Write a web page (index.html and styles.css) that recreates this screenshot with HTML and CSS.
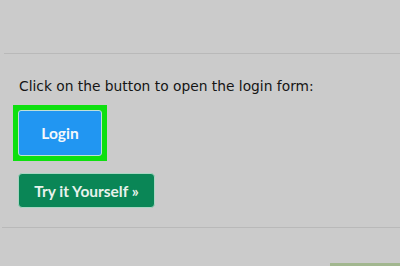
FILE: index.html
```html
<!DOCTYPE html>
<html>
<head>
<meta charset="utf-8">
<link rel="stylesheet" href="styles.css">
</head>
<body>
<div class="page">
  <div class="rule rule-top"></div>
  <p class="intro">Click on the button to open the login form:</p>
  <div class="highlight"><button class="btn-login">Login</button></div>
  <a class="btn-try">Try it Yourself »</a>
  <div class="rule rule-bottom"></div>
  <div class="footer"><div class="badge"></div></div>
</div>
</body>
</html>
```
FILE: styles.css
```css
html, body {
  margin: 0;
  padding: 0;
  background: #cbcbcb;
}
.page {
  width: 400px;
  height: 266px;
  overflow: hidden;
  display: flex;
  flex-direction: column;
  align-items: flex-start;
}
.rule {
  height: 1px;
  background: #b9b9b9;
  align-self: stretch;
  margin-left: 4px;
}
.rule-top {
  margin-top: 53px;
}
.intro {
  margin: 23px 0 0 19px;
  font-family: "DejaVu Sans", Verdana, sans-serif;
  font-size: 13.8px;
  line-height: 18px;
  color: #151515;
}
.highlight {
  margin: 10px 0 0 13px;
  border: 5px solid #0ee010;
  background: #0ee010;
  display: flex;
}
.btn-login {
  box-sizing: border-box;
  width: 84px;
  height: 46px;
  border: 1px solid #bfe0d8;
  border-radius: 3px;
  background: #2196f2;
  color: #f4f8fb;
  font-family: Lato, "Open Sans", sans-serif;
  font-weight: 700;
  font-size: 15.5px;
  padding: 0;
}
.btn-try {
  margin: 12px 0 0 18px;
  width: 137px;
  height: 35px;
  box-sizing: border-box;
  border: 1px solid #a8d6c2;
  border-radius: 4px;
  background: #0a8656;
  color: #e8f2ec;
  font-family: Lato, "Open Sans", sans-serif;
  font-weight: 700;
  font-size: 15.5px;
  display: flex;
  align-items: center;
  justify-content: center;
}
.rule-bottom {
  margin-top: 19px;
  margin-left: 2px;
}
.footer {
  flex: 1;
  align-self: stretch;
  display: flex;
  justify-content: flex-end;
  align-items: flex-end;
}
.badge {
  width: 70px;
  height: 3px;
  background: #a2b78f;
}
```
